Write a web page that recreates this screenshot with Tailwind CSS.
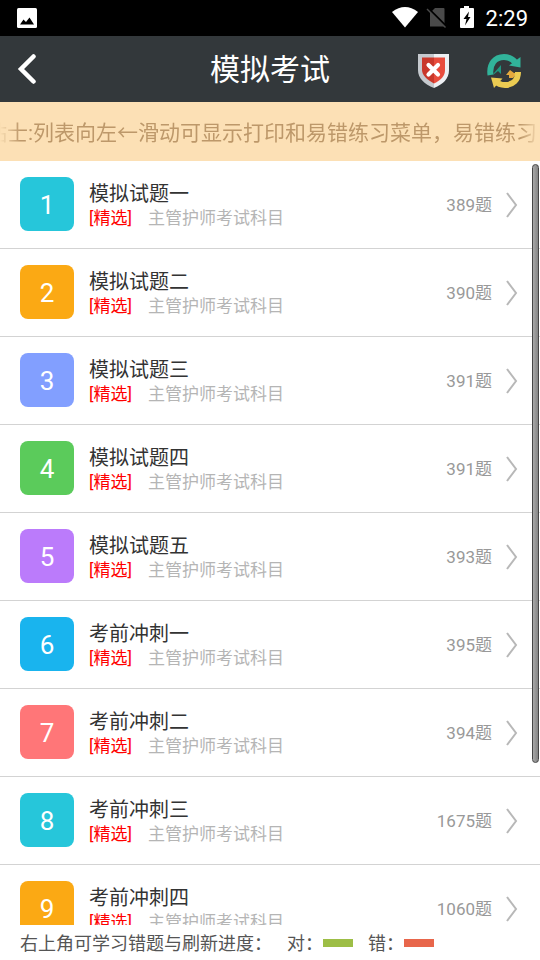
<!DOCTYPE html>
<html lang="zh-CN">
<head>
<meta charset="utf-8">
<meta name="viewport" content="width=device-width, initial-scale=1">
<title>模拟考试</title>
<script src="https://cdn.jsdelivr.net/npm/@tailwindcss/browser@4"></script>
</head>
<body class="flex h-screen flex-col overflow-hidden bg-white font-[Roboto,'Noto_Sans_CJK_SC',sans-serif]">

<div class="flex h-9 shrink-0 items-center justify-between bg-black pr-3 pl-4 text-white">
  <svg class="size-6" viewBox="0 0 24 24" aria-hidden="true"><rect x="1" y="2" width="20" height="20" rx="1.5" fill="#fff"/><path d="M4 18.500l3.500-5 2.500 2.500 3.500-4.500 4.500 7z" fill="#000"/></svg>
  <div class="flex items-center">
    <svg class="h-6 w-7" viewBox="0 0 28 24" aria-hidden="true"><path d="M2 6Q15-4 28 6L15 21.500z" fill="#fff"/></svg>
    <svg class="ml-2 h-6 w-5" viewBox="0 0 20 24" aria-hidden="true"><path d="M9 2h8.500q1 0 1 1v17.500H4V7z" fill="#4a4a4a"/><path d="M2 2l19 19" stroke="#000" stroke-width="2"/><path d="M1 3l18.500 18.500" stroke="#4a4a4a" stroke-width="1.500"/></svg>
    <svg class="ml-3 h-6 w-4" viewBox="0 0 16 24" aria-hidden="true"><path d="M6 0h5v2h4q1 0 1 1v18q0 1-1 1H3q-1 0-1-1V3q0-1 1-1h3z" fill="#fff"/><path d="M11 5.500L5.500 13h3L7 19.500 12.500 11H10z" fill="#000"/></svg>
    <span class="ml-2 pt-0.5 pl-1 text-[22px] leading-6">2:29</span>
  </div>
</div>

<header class="grid h-[66px] shrink-0 grid-cols-[1fr_auto_1fr] items-center bg-[#33383b] pt-0.5 pr-[17px] pl-[17px] text-white">
  <button type="button" aria-label="返回" class="justify-self-start">
    <svg class="h-8 w-6" viewBox="0 0 24 32" fill="none" stroke="#fff" stroke-width="4.500" stroke-linecap="round"><path d="M16.500 2.500L4 15l12.500 12.500"/></svg>
  </button>
  <h1 class="text-[30px] leading-10">模拟考试</h1>
  <div class="flex gap-[37px] justify-self-end">
    <button type="button" aria-label="错题">
      <svg class="h-9 w-8" viewBox="0 0 32 36"><path d="M0 2h16v34C6 32 0 26 0 18z" fill="#c5c9ce"/><path d="M16 2h15v16c0 9-6 14-15 18z" fill="#edf0f3"/><path d="M4 5.500h12v26C9 28 4 23 4 18z" fill="#c9382b"/><path d="M16 5.500h11V18c0 6-4 10-11 13.500z" fill="#e84c3d"/><path d="M10.500 13l9.500 9.500M20 13l-9.500 9.500" stroke="#fff" stroke-width="4.200" stroke-linecap="round"/></svg>
    </button>
    <button type="button" aria-label="刷新">
      <svg class="h-9 w-9" viewBox="0 0 36 36"><path d="M7 21l7-8v9l-3-3-5 4z" fill="#1f9680"/><path d="M3.500 23C2 12 8 5 17 5c5 0 8 1.500 11 5" fill="none" stroke="#31b39a" stroke-width="6"/><path d="M33.500 5v10.500L22 13.500z" fill="#31b39a"/><path d="M30 21h-3l-4-3-4 5h3v3h4z" fill="#e5a93d"/><path d="M31 20c0 8-5 13-13 13-4 0-7-1-10-4" fill="none" stroke="#ebcb52" stroke-width="6"/><path d="M4 25.500l11.500 1L7 36z" fill="#ebcb52"/></svg>
    </button>
  </div>
</header>

<div class="h-[59px] shrink-0 overflow-hidden bg-[#fce0b5] text-[#bd986a]">
  <p class="overflow-hidden mask-[linear-gradient(to_right,transparent,black_20px,black_calc(100%-20px),transparent)] pt-0.5 text-[21px] leading-[59px] whitespace-nowrap"><span class="-ml-3.5">贴士:列表向左←滑动可显示打印和易错练习菜单，易错练习</span></p>
</div>

<main class="relative min-h-0 flex-1 overflow-hidden">
  <ul id="exams"></ul>
  <div class="absolute top-[3px] right-px h-[599px] w-[7px] rounded-full border border-[#454545] bg-linear-to-r from-[#a8a8a8] to-[#858585]"></div>
</main>

<footer class="flex h-[35px] shrink-0 items-center px-5 text-lg text-[#555]">
  <span class="w-[267px] pt-0.5">右上角可学习错题与刷新进度：</span>
  <span class="pt-0.5">对：</span><span class="h-2 w-[30px] bg-[#9dbe46]"></span>
  <span class="ml-[15px] pt-0.5">错：</span><span class="h-2 w-[30px] bg-[#e8664b]"></span>
</footer>

<script>
const exams = [
  ['模拟试题一', 389, '#26c6da'],
  ['模拟试题二', 390, '#fba914'],
  ['模拟试题三', 391, '#829fff'],
  ['模拟试题四', 391, '#5bcb5b'],
  ['模拟试题五', 393, '#bb7bfb'],
  ['考前冲刺一', 395, '#19b4ee'],
  ['考前冲刺二', 394, '#ff7678'],
  ['考前冲刺三', 1675, '#26c6da'],
  ['考前冲刺四', 1060, '#fba914'],
];
document.getElementById('exams').innerHTML = exams.map(([name, count, color], i) => `
  <li class="border-b border-[#d3d3d3]">
    <a href="#" class="flex h-[87px] items-start pt-4 pr-[22px] pl-5">
      <span class="flex size-[54px] shrink-0 items-center justify-center rounded-lg pt-0.5 text-[26px] leading-none text-white" style="background:${color}">${i + 1}</span>
      <span class="ml-[15px] flex-1 pt-[5px]">
        <span class="block text-xl leading-6 text-[#333]">${name}</span>
        <span class="flex gap-4 text-[17px] leading-6 text-[#b5b5b5]"><span class="text-[#f00]">[精选]</span><span>主管护师考试科目</span></span>
      </span>
      <span class="flex h-14 items-center">
        <span class="text-[17px] leading-6 text-[#999]">${count}题</span>
        <svg class="ml-[13px] h-[26px] w-[13px]" viewBox="0 0 13 26" fill="none" stroke="#b8b8b8" stroke-width="2" aria-hidden="true"><path d="M2 1l9 12-9 12"/></svg>
      </span>
    </a>
  </li>`).join('');
</script>
</body>
</html>
